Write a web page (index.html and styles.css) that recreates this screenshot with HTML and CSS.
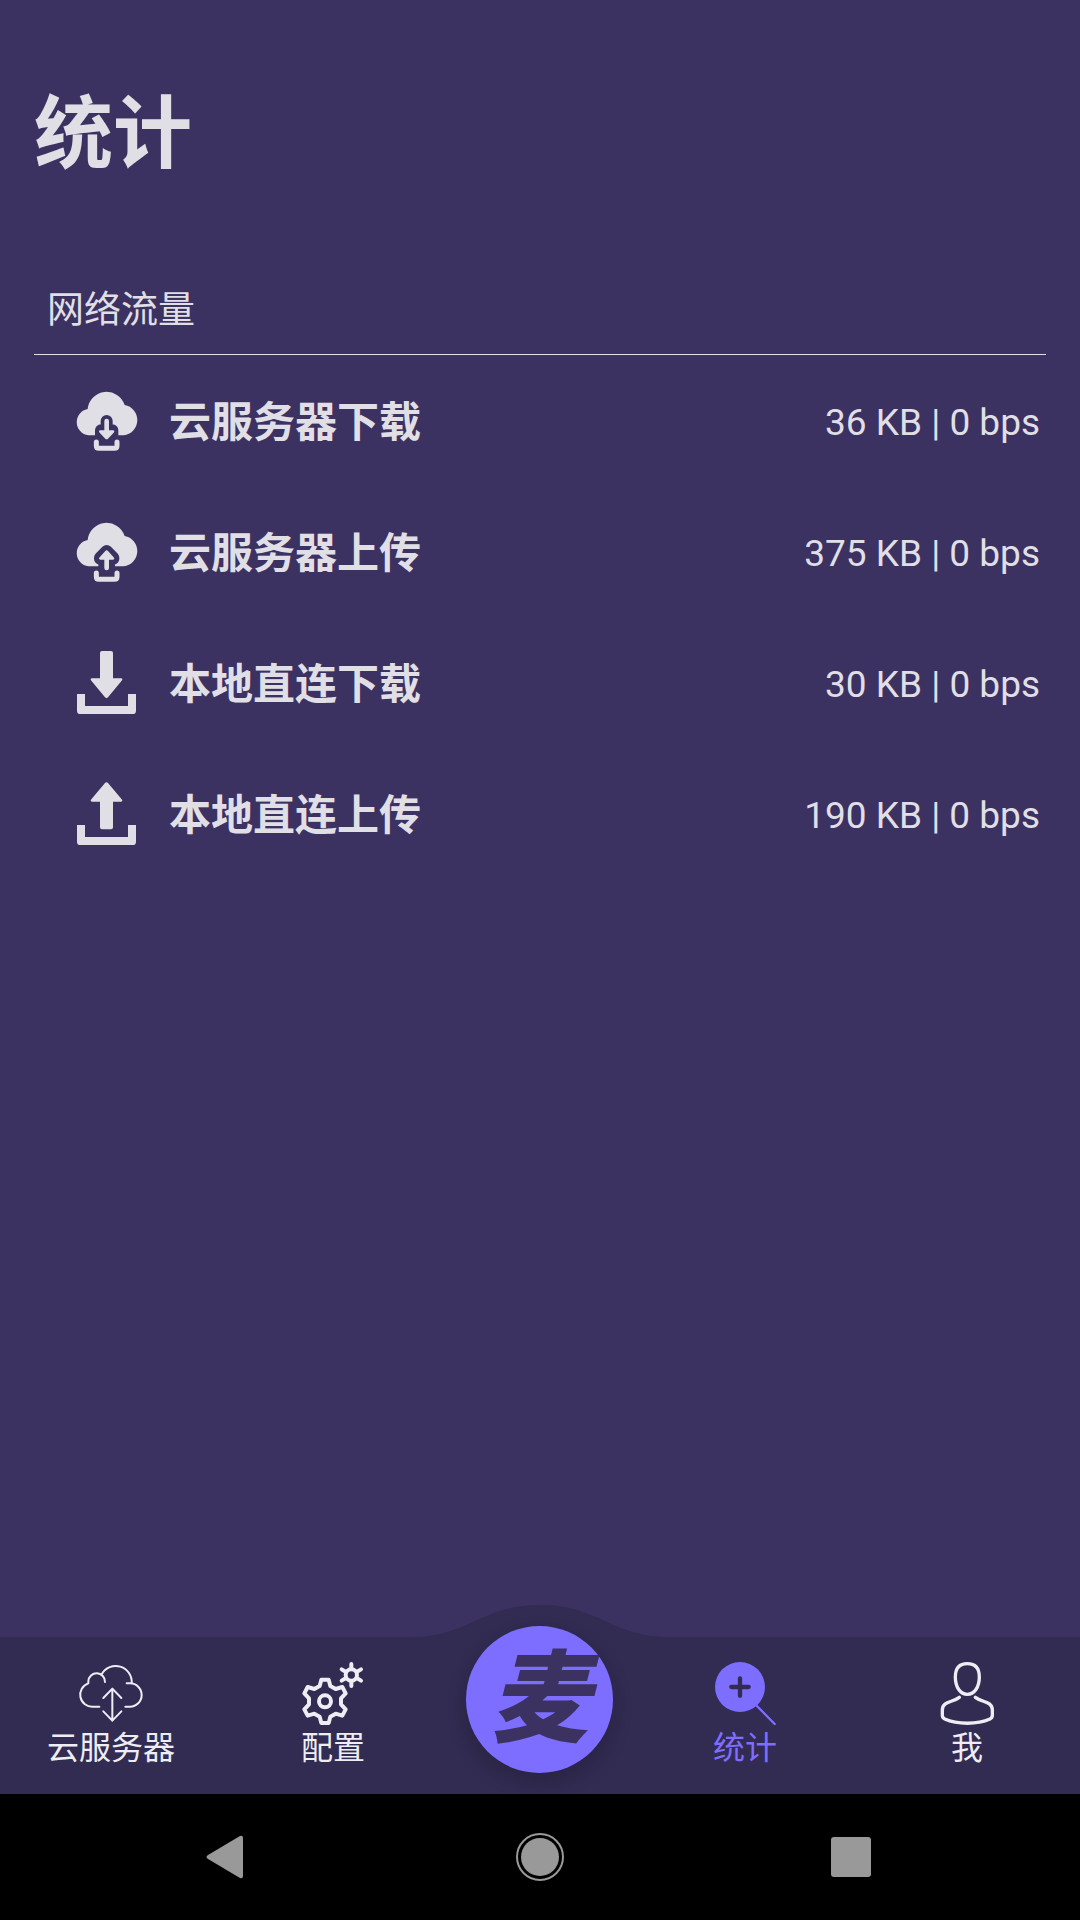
FILE: index.html
```
<!DOCTYPE html>
<html lang="zh-CN">

<head>
    <meta charset="UTF-8">
    <meta name="viewport" content="width=device-width, initial-scale=1.0">
    <title>统计</title>
    <link rel="stylesheet" href="styles.css">
</head>

<body>
    <main class="page">
        <h1 class="title">统计</h1>
        <h2 class="section">网络流量</h2>
        <ul class="list">
            <li class="row">
                <svg class="icon" viewBox="0 0 189 189">
                    <path d="M40 133A40 40 0 0 1 38 54A57 57 0 0 1 149 42A46 46 0 0 1 146 133Z" />
                    <path class="cut" d="M95 90V118M78 118L95 135L112 118V131H78Z" />
                    <path d="M88 90Q88 83 95 83Q102 83 102 90V118H114Q121 119 116 125L99 143Q95 147 91 143L74 125Q69 119 76 118H88Z" />
                    <path class="tray" d="M64 153V164Q64 172 72 172H118Q126 172 126 164V153" />
                </svg>
                <span class="name">云服务器下载</span>
                <span class="value">36 KB | 0 bps</span>
            </li>
            <li class="row">
                <svg class="icon" viewBox="0 0 189 189">
                    <path d="M40 133A40 40 0 0 1 38 54A57 57 0 0 1 149 42A46 46 0 0 1 146 133Z" />
                    <path class="cut" d="M95 87L75 107V110H88V140H102V110H115V107Z" />
                    <path d="M88 138Q88 145 95 145Q102 145 102 138V113H114Q121 112 116 106L99 87Q95 83 91 87L74 106Q69 112 76 113H88Z" />
                    <path class="tray" d="M64 153V164Q64 172 72 172H118Q126 172 126 164V153" />
                </svg>
                <span class="name">云服务器上传</span>
                <span class="value">375 KB | 0 bps</span>
            </li>
            <li class="row">
                <svg class="icon" viewBox="0 6 189 189">
                    <path d="M81 0H108Q114 0 114 6V82H138Q145 83 140 89L99 139Q95 144 90 139L49 89Q44 83 51 82H75V6Q75 0 81 0Z" />
                    <path d="M6 129H30V165H159V129H183V179Q183 189 173 189H16Q6 189 6 179Z" />
                </svg>
                <span class="name">本地直连下载</span>
                <span class="value">30 KB | 0 bps</span>
            </li>
            <li class="row">
                <svg class="icon" viewBox="0 6 189 189">
                    <path d="M81 142H108Q114 142 114 136V59H138Q145 58 140 52L99 3Q95 -2 90 3L49 52Q44 58 51 59H75V136Q75 142 81 142Z" />
                    <path d="M6 129H30V165H159V129H183V179Q183 189 173 189H16Q6 189 6 179Z" />
                </svg>
                <span class="name">本地直连上传</span>
                <span class="value">190 KB | 0 bps</span>
            </li>
        </ul>
    </main>

    <nav class="tabs">
        <svg class="hump" viewBox="0 0 260 33">
            <path d="M0 33V32C60 32 70 0 130 0C190 0 200 32 260 32V33Z" />
        </svg>
        <a class="tab" href="#">
            <svg class="icon line" viewBox="0 0 189 189" stroke-width="6">
                <path d="M58 134H39A36 36 0 0 1 25 64V58A24 24 0 0 1 75 60M65 37A48 48 0 0 1 155 64M140 64H150A35 35 0 0 1 150 134H136" />
                <path d="M97 80V176M70 108L97 80L124 108M70 148L97 176L124 148" />
            </svg>
            <span>云服务器</span>
        </a>
        <a class="tab" href="#">
            <svg class="icon line" viewBox="0 0 189 189" stroke-width="12">
                <path transform="translate(69 118)" d="M-11 -65H11L16 -46L32 -37L52 -43L62 -24L48 -9V9L62 24L52 43L32 37L16 46L11 65H-11L-16 46L-32 37L-52 43L-62 24L-48 9V-9L-62 -24L-52 -43L-32 -37L-16 -46Z" />
                <circle cx="69" cy="118" r="18" />
                <circle cx="148" cy="39" r="17" />
                <path d="M148 6V21M148 57V72M119 22L132 30M164 48L177 56M119 56L132 48M164 30L177 22" />
            </svg>
            <span>配置</span>
        </a>
        <div class="center">
            <button class="fab" type="button">麦</button>
        </div>
        <a class="tab active" href="#">
            <svg class="icon" viewBox="0 0 189 189">
                <circle cx="78" cy="75" r="75" />
                <path class="plus" d="M52 75H104M78 49V101" />
                <path class="handle" d="M126 129L182 186" />
            </svg>
            <span>统计</span>
        </a>
        <a class="tab" href="#">
            <svg class="icon line" viewBox="0 0 189 189" stroke-width="10">
                <path d="M94 5C120 5 130 21 130 45C130 76 115 97 94 97C73 97 58 76 58 45C58 21 68 5 94 5Z" />
                <path d="M70 106C50 122 19 117 19 144V160Q19 168 26 171C64 188 124 188 162 171Q169 168 169 160V144C169 117 138 122 118 106" />
            </svg>
            <span>我</span>
        </a>
    </nav>

    <div class="system">
        <button type="button" aria-label="返回">
            <svg viewBox="0 0 48 48">
                <path d="M3 22L35 3Q38 2 38 5V43Q38 46 35 45L3 26Q0 24 3 22Z" />
            </svg>
        </button>
        <button type="button" aria-label="主屏幕">
            <svg viewBox="0 0 48 48">
                <circle cx="24" cy="24" r="19" />
                <circle class="ring" cx="24" cy="24" r="23" />
            </svg>
        </button>
        <button type="button" aria-label="最近任务">
            <svg viewBox="0 0 48 48">
                <rect x="4" y="4" width="40" height="40" rx="3" />
            </svg>
        </button>
    </div>
</body>

</html>
```
FILE: styles.css
```
* {
    margin: 0;
    padding: 0;
    box-sizing: border-box;
}

body {
    display: flex;
    flex-direction: column;
    min-height: 100vh;
    background-color: #3b3261;
    color: #e0dfe6;
    font-family: Roboto, "Noto Sans CJK SC", sans-serif;
}

ul {
    list-style-type: none;
}

a {
    text-decoration: none;
}

button {
    border: none;
    background: none;
    font-family: inherit;
}

.page {
    flex: 1;
    padding: 77px 34px 0;
}

.title {
    line-height: 116px;
    font-size: 79px;
    font-weight: bold;
}

.section {
    margin-top: 82px;
    padding: 9px 13px 16px;
    border-bottom: 1px solid #e0dfe6;
    line-height: 54px;
    font-size: 37px;
    font-weight: normal;
}

.list {
    padding-top: 2px;
}

.row {
    display: flex;
    align-items: center;
    gap: 31px;
    height: 131px;
    padding: 0 6px 0 41px;
    line-height: 60px;
}

.icon {
    display: block;
    width: 63px;
    height: 63px;
    fill: currentColor;
    overflow: visible;
}

.cut {
    fill: #3b3261;
    stroke: #3b3261;
    stroke-width: 36;
    stroke-linejoin: round;
    stroke-linecap: round;
}

.tray {
    fill: none;
    stroke: currentColor;
    stroke-width: 15;
    stroke-linecap: round;
}

.name {
    flex: 1;
    font-size: 42px;
    font-weight: bold;
}

.value {
    font-size: 37px;
}

/* 底部导航 */
.tabs {
    position: relative;
    display: flex;
    height: 157px;
    padding-right: 2px;
    background-color: #322b52;
}

.hump {
    position: absolute;
    left: 50%;
    bottom: 100%;
    width: 260px;
    height: 33px;
    margin-left: -130px;
    margin-bottom: -1px;
    fill: #322b52;
}

.tab {
    flex: 1;
    display: flex;
    flex-direction: column;
    align-items: center;
    padding-top: 25px;
    color: #ededf3;
    font-size: 32px;
    line-height: 46px;
}

.tab.active {
    color: #7d6eff;
}

.line {
    fill: none;
    stroke: currentColor;
    stroke-linecap: round;
    stroke-linejoin: round;
}

.plus {
    stroke: #322b52;
    stroke-width: 13;
    stroke-linecap: round;
}

.handle {
    stroke: currentColor;
    stroke-width: 7;
    stroke-linecap: round;
}

.center {
    display: flex;
    justify-content: center;
    width: 190px;
}

.fab {
    position: relative;
    width: 147px;
    height: 147px;
    margin-top: -11px;
    border-radius: 50%;
    background-color: #7d6eff;
    box-shadow: 0 8px 20px rgba(0, 0, 0, .2);
    color: #3b3261;
    font-size: 100px;
    font-style: italic;
    font-weight: 900;
    line-height: 147px;
}

/* 系统按键 */
.system {
    display: flex;
    justify-content: space-between;
    align-items: center;
    height: 126px;
    padding: 0 19%;
    background-color: #000;
}

.system svg {
    display: block;
    width: 48px;
    height: 48px;
    fill: #999;
}

.system .ring {
    fill: none;
    stroke: #999;
    stroke-width: 2;
}
```
